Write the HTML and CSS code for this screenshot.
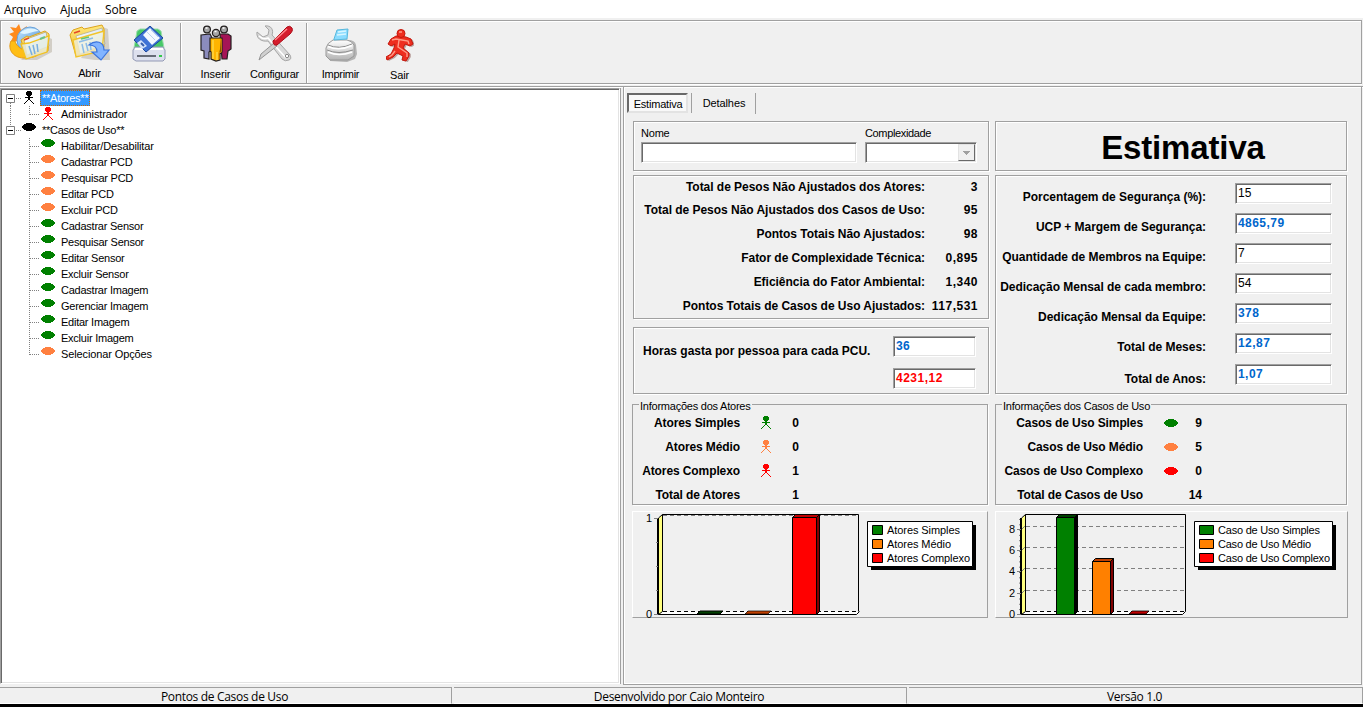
FILE: index.html
```html
<!DOCTYPE html>
<html lang="pt-BR">
<head>
<meta charset="utf-8">
<title>Pontos de Casos de Uso</title>
<link rel="stylesheet" href="styles.css">
</head>
<body>
<svg class="defs" aria-hidden="true">
  <defs>
    <symbol id="actor" viewBox="0 0 10 14"><path d="M3 0h4v1h1v3H7v1H6v1h3v1H6v2h1v1h1v1h1v1h1v1H9v-1H8v-1H7v-1H6v-1H4v1H3v1H2v1H1v1H0v-1h1v-1h1v-1h1V9h1V7H1V6h3V5H3V4H2V1h1z" fill="currentColor"/></symbol>
    <symbol id="oval" viewBox="0 0 14 8"><path d="M4 0h6v1h2v1h1v1h1v2h-1v1h-1v1h-2v1H4V7H2V6H1V5H0V3h1V2h1V1h2z" fill="currentColor"/></symbol>
    <symbol id="branch" viewBox="2 0 57 16"><path d="M30.500 0V16M31 8.500H41" fill="none" stroke="#808080" stroke-dasharray="1 1"/></symbol>
    <symbol id="last" viewBox="2 0 57 16"><path d="M30.500 0V9M31 8.500H41" fill="none" stroke="#808080" stroke-dasharray="1 1"/></symbol>
    <linearGradient id="paper" x1="0" y1="0" x2="1" y2="1"><stop offset="0" stop-color="#fff"/><stop offset="1" stop-color="#b9d6f4"/></linearGradient>
    <linearGradient id="gold" x1="0" y1="0" x2="0" y2="1"><stop offset="0" stop-color="#ffe97c"/><stop offset="1" stop-color="#efb92c"/></linearGradient>
    <linearGradient id="steel" x1="0" y1="0" x2="0" y2="1"><stop offset="0" stop-color="#fff"/><stop offset="1" stop-color="#b4b4b4"/></linearGradient>
    <linearGradient id="sky" x1="0" y1="0" x2="1" y2="1"><stop offset="0" stop-color="#c5e9ff"/><stop offset="1" stop-color="#3c82d2"/></linearGradient>
  </defs>
</svg>
<div class="window">
  <nav class="menu"><span class="m1">Arquivo</span><span class="m2">Ajuda</span><span class="m3">Sobre</span></nav>

  <header class="toolbar">
    <div class="tool t-novo">
      <svg width="44" height="38" viewBox="0 0 44 38">
        <path d="M36 12l7 3v13l-15 8H12z" fill="#d2cec6"/>
        <path d="M10 0l2 6 6-4-2 6 4 3-6 3-2 6-5-3-6 2 3-6-4-3 5-2-4-5 6 1z" fill="#ff8a1c"/>
        <circle cx="21" cy="16" r="13" fill="url(#sky)" stroke="#6ba3da"/>
        <path d="M11 9c5-5 13-6 19-2-6 0-10 3-15 3z" fill="#e0f5ff"/>
        <path d="M2 17c-4 9 3 18 15 17 8 0 14-3 16-8-6 3-13 3-18 0-5-2-8-5-9-9z" fill="#ffbe16" stroke="#e69a12"/>
        <path d="M12 16l6-4 2 1 16-6 4 3-1 17-21 7z" fill="url(#gold)" stroke="#dca31f"/>
        <path d="M15 16l22-8 3 14-22 9z" fill="url(#paper)" stroke="#bba86c" stroke-width=".8"/>
        <path d="M12 20l8-1 20-7-2 16-21 7z" fill="#e9efe2" fill-opacity=".8" stroke="#f3c21c" stroke-width="1.300"/>
        <path d="M20 22l3 9M24 21l2 9M28 20l1 8" stroke="#78aee0" stroke-width="1.500"/><path d="M15 16l5-2" stroke="#e34828" stroke-width="1.500"/><path d="M31 15l5-2" stroke="#6cc285" stroke-width="2"/>
      </svg><span>Novo</span></div>
    <div class="tool t-abrir">
      <svg width="44" height="38" viewBox="0 0 44 38">
        <path d="M35 3l5 2 2 31H27L13 34z" fill="#d2cfc8"/>
        <path d="M2 11l3-5 9-3 2 2 18-4 2 4v18L8 32z" fill="url(#gold)" stroke="#dca31f"/>
        <path d="M8 12l26-8 3 16-25 10z" fill="url(#paper)" stroke="#b9ad88" stroke-width=".8"/>
        <path d="M5 16l31-9-2 20-26 6z" fill="#f2f1dc" fill-opacity=".75" stroke="#f2c42a" stroke-width="1.400"/>
        <path d="M11 18l14-4M14 20l2 9M18 19l2 8M22 18l1 8" stroke="#8cbce7" stroke-width="1.500"/><path d="M6 9l6-2" stroke="#e34828" stroke-width="1.500"/><path d="M13 15l8-2" stroke="#63c573" stroke-width="1.500"/>
        <path d="M21 21c7-6 15-3 15 5h5l-8 10-9-8h5c0-5-3-7-8-7z" fill="#82b4ff" stroke="#3b74dd" stroke-width="1.200"/>
      </svg><span>Abrir</span></div>
    <div class="tool t-salvar">
      <svg width="34" height="36" viewBox="0 0 34 36">
        <path d="M5 5l3-2h18l3 2 3 17H2z" fill="#47c968" stroke="#9bdcac"/>
        <path d="M3 21h28l2 3v9l-2 2H4l-3-2v-9z" fill="#dde0ee" stroke="#9299b4"/>
        <path d="M3 23h28" stroke="#fff" stroke-width="2"/><path d="M5 30h19" stroke="#3f454f" stroke-width="1.500"/><path d="M27 30h3" stroke="#34c74a" stroke-width="2"/>
        <path d="M18 0l13 12-17 14L2 14z" fill="#3f73d6" stroke="#1d479c"/>
        <path d="M18 2l10 10-8 7-9-10z" fill="#f4f9ff"/><path d="M15 6l8 8M19 4l7 7" stroke="#b9d1ec"/>
        <path d="M9 14l6 6-5 3-5-6z" fill="#d7e6fb"/><path d="M9 17l3 3" stroke="#375eac" stroke-width="2"/>
      </svg><span>Salvar</span></div>
    <i class="sep"></i>
    <div class="tool t-inserir">
      <svg width="32" height="37" viewBox="0 0 32 37" stroke="#242020" stroke-width="1.200">
        <path d="M1 10l9-1 2 4v12l-3 2v7l-5-1v-7l-3-1z" fill="#8b8cbd"/><path d="M20 9h8l3 2v13l-3 2-1 8h-5z" fill="#a51456"/>
        <path d="M10 13h12v14l-2 2v6l-4 1-5-2v-7l-1-1z" fill="#ffb400"/><path d="M13 15v19M17 27v8" stroke="#ffe053"/><path d="M21 14v13l-2 1v6" stroke="#e08c00"/>
        <circle cx="7" cy="4.500" r="3.400" fill="#a5a5a5"/><circle cx="24" cy="4.500" r="3.400" fill="#a5a5a5"/><circle cx="16" cy="8" r="3.600" fill="#a5a5a5"/>
        <path d="M5.500 3h2M22.500 3h2M14.500 6.500h2" stroke="#fff" stroke-width="1.700"/>
      </svg><span>Inserir</span></div>
    <div class="tool t-config">
      <svg width="38" height="37" viewBox="0 0 38 37">
        <path d="M1 7l6 5 5-2 1-5-4-4c6-1 9 4 7 9l18 20q2 4-1 5-4 2-7-1L12 16C5 17 0 13 1 7z" fill="#d9d9d9" stroke="#a6a6a6"/>
        <path d="M3 11q4 4 9 2l18 20" fill="none" stroke="#fff" stroke-width="1.500"/>
        <circle cx="31" cy="31" r="1.700" fill="#fff" stroke="#888"/>
        <path d="M18 18l3 3L8 31l-5 4 2-6z" fill="#d0d0d0" stroke="#959595"/>
        <path d="M17 16L31 2q3-2 5 1c1 2 0 4-2 6L21 20q-4 1-4-4z" fill="#d51c2c" stroke="#ac0d17"/><path d="M19 15L31 4" stroke="#ff858a" stroke-width="1.500"/>
      </svg><span>Configurar</span></div>
    <i class="sep s2"></i>
    <div class="tool t-print">
      <svg width="32" height="34" viewBox="0 0 32 34">
        <path d="M4 24q-1-7 5-9l14-3q7 0 8 5l1 9-2 5-8 3-17-1z" fill="#b4b4b4"/>
        <path d="M1 20q1-5 7-8h14q5 1 7 5v11l-6 4H5l-4-4z" fill="url(#steel)" stroke="#999"/>
        <path d="M9 11l3-9 11-1-1 10-13 1z" fill="#8bdcff" stroke="#58b8dc"/><path d="M13 4l8-1M12 7l9-1" stroke="#d8f6ff" stroke-width="1.600"/>
        <path d="M3 17q11 5 24-1M2 22q11 5 26 0" fill="none" stroke="#8c8c8c"/><path d="M3 18.500q11 5 24-1M3 24q11 5 24 0" fill="none" stroke="#fff" stroke-width="1.500"/>
      </svg><span>Imprimir</span></div>
    <div class="tool t-sair">
      <svg width="28" height="33" viewBox="0 0 28 33">
        <path d="M15 6l6 2 5 2 2 5-3 2-5-2-2 4 6 5v3l-3 5-4-1 1-4-6-3-4 4-6 3-2-3 6-3 3-6 1-4-4 2-3-2 3-5 5-3z" fill="#b9a09d" transform="translate(.8 1)"/>
        <path d="M14 7l6 1 5 2 2 5-3 2-5-2-2 4 6 5v3l-3 5-4-1 1-4-6-3-4 4-6 3-1-3 5-3 3-6 1-4-4 2-3-2 3-5 5-3z" fill="#ee2e20" stroke="#c4180d"/>
        <circle cx="15" cy="4.500" r="4" fill="#ee2e20" stroke="#c4180d"/>
        <path d="M13 3h3M6 11l4-1 6 1 6 1 1 3M13 11l-1 7 6 4 3 2v4M9 22l-3 4-3 2" fill="none" stroke="#ff9b88" stroke-width="1.400"/>
      </svg><span>Sair</span></div>
  </header>

  <main class="work">
    <section class="tree">
      <div class="node"><svg class="twig root" viewBox="2 0 38 16"><path d="M10.500 13v3M16 8.500h6" stroke="#808080" stroke-dasharray="1 1"/><path d="M6.500 4.500h8v8h-8z" fill="#fff" stroke="#808080"/><path d="M8 8.500h5" stroke="#000"/><use href="#actor" x="24" y="1" width="10" height="14"/></svg><b class="sel">**Atores**</b></div>
      <div class="node"><svg class="twig" viewBox="2 0 57 16"><path d="M10.500 0v16M29.500 0v9M30 8.500h9" fill="none" stroke="#808080" stroke-dasharray="1 1"/><use class="red" href="#actor" x="43" y="1" width="10" height="14"/></svg><span>Administrador</span></div>
      <div class="node"><svg class="twig root" viewBox="2 0 38 16"><path d="M10.500 0v4M16 8.500h6" stroke="#808080" stroke-dasharray="1 1"/><path d="M6.500 4.500h8v8h-8z" fill="#fff" stroke="#808080"/><path d="M8 8.500h5" stroke="#000"/><use href="#oval" x="22" y="1" width="14" height="8"/></svg><b>**Casos de Uso**</b></div>
      <div class="node"><svg class="twig green" viewBox="2 0 57 16"><use href="#branch" x="1" y="0" width="57" height="16"/><use href="#oval" x="41" y="1" width="14" height="8"/></svg><span>Habilitar/Desabilitar</span></div>
      <div class="node"><svg class="twig coral" viewBox="2 0 57 16"><use href="#branch" x="1" y="0" width="57" height="16"/><use href="#oval" x="41" y="1" width="14" height="8"/></svg><span class="tight">Cadastrar PCD</span></div>
      <div class="node"><svg class="twig coral" viewBox="2 0 57 16"><use href="#branch" x="1" y="0" width="57" height="16"/><use href="#oval" x="41" y="1" width="14" height="8"/></svg><span class="tight">Pesquisar PCD</span></div>
      <div class="node"><svg class="twig coral" viewBox="2 0 57 16"><use href="#branch" x="1" y="0" width="57" height="16"/><use href="#oval" x="41" y="1" width="14" height="8"/></svg><span class="tight">Editar PCD</span></div>
      <div class="node"><svg class="twig coral" viewBox="2 0 57 16"><use href="#branch" x="1" y="0" width="57" height="16"/><use href="#oval" x="41" y="1" width="14" height="8"/></svg><span class="tight">Excluir PCD</span></div>
      <div class="node"><svg class="twig green" viewBox="2 0 57 16"><use href="#branch" x="1" y="0" width="57" height="16"/><use href="#oval" x="41" y="1" width="14" height="8"/></svg><span class="tight">Cadastrar Sensor</span></div>
      <div class="node"><svg class="twig green" viewBox="2 0 57 16"><use href="#branch" x="1" y="0" width="57" height="16"/><use href="#oval" x="41" y="1" width="14" height="8"/></svg><span class="tight">Pesquisar Sensor</span></div>
      <div class="node"><svg class="twig green" viewBox="2 0 57 16"><use href="#branch" x="1" y="0" width="57" height="16"/><use href="#oval" x="41" y="1" width="14" height="8"/></svg><span class="tight">Editar Sensor</span></div>
      <div class="node"><svg class="twig green" viewBox="2 0 57 16"><use href="#branch" x="1" y="0" width="57" height="16"/><use href="#oval" x="41" y="1" width="14" height="8"/></svg><span class="tight">Excluir Sensor</span></div>
      <div class="node"><svg class="twig green" viewBox="2 0 57 16"><use href="#branch" x="1" y="0" width="57" height="16"/><use href="#oval" x="41" y="1" width="14" height="8"/></svg><span class="tight">Cadastrar Imagem</span></div>
      <div class="node"><svg class="twig green" viewBox="2 0 57 16"><use href="#branch" x="1" y="0" width="57" height="16"/><use href="#oval" x="41" y="1" width="14" height="8"/></svg><span class="tight">Gerenciar Imagem</span></div>
      <div class="node"><svg class="twig green" viewBox="2 0 57 16"><use href="#branch" x="1" y="0" width="57" height="16"/><use href="#oval" x="41" y="1" width="14" height="8"/></svg><span class="tight">Editar Imagem</span></div>
      <div class="node"><svg class="twig green" viewBox="2 0 57 16"><use href="#branch" x="1" y="0" width="57" height="16"/><use href="#oval" x="41" y="1" width="14" height="8"/></svg><span class="tight">Excluir Imagem</span></div>
      <div class="node"><svg class="twig coral" viewBox="2 0 57 16"><use href="#last" x="1" y="0" width="57" height="16"/><use href="#oval" x="41" y="1" width="14" height="8"/></svg><span>Selecionar Opções</span></div>
    </section>

    <section class="panel">
      <div class="tabs"><span class="tab on">Estimativa</span><span class="tab">Detalhes</span></div>
      <div class="cols">
        <div class="left">
          <div class="box filter">
            <label class="f-name">Nome<span class="field"></span></label>
            <label class="f-cx">Complexidade<span class="field combo"><i><svg width="7" height="4" viewBox="0 0 7 4"><path d="M0 0h7v1H6v1H5v1H4v1H3V3H2V2H1V1H0z" fill="#a0a0a0"/></svg></i></span></label>
          </div>
          <div class="box totals">
            <p class="first"><b>Total de Pesos Não Ajustados dos Atores:</b><b>3</b></p>
            <p><b>Total de Pesos Não Ajustados dos Casos de Uso:</b><b>95</b></p>
            <p><b>Pontos Totais Não Ajustados:</b><b>98</b></p>
            <p><b>Fator de Complexidade Técnica:</b><b>0,895</b></p>
            <p><b>Eficiência do Fator Ambiental:</b><b>1,340</b></p>
            <p><b>Pontos Totais de Casos de Uso Ajustados:</b><b>117,531</b></p>
          </div>
          <div class="box hours">
            <b>Horas gasta por pessoa para cada PCU.</b>
            <div><span class="field blue">36</span><span class="field crimson">4231,12</span></div>
          </div>
          <fieldset class="info actors">
            <legend>Informações dos Atores</legend>
            <p><b>Atores Simples</b><svg class="green" width="10" height="14"><use href="#actor" width="10" height="14"/></svg><b>0</b></p>
            <p><b>Atores Médio</b><svg class="coral" width="10" height="14"><use href="#actor" width="10" height="14"/></svg><b>0</b></p>
            <p><b>Atores Complexo</b><svg class="red" width="10" height="14"><use href="#actor" width="10" height="14"/></svg><b>1</b></p>
            <p><b>Total de Atores</b><i></i><b>1</b></p>
          </fieldset>
          <div class="chart">
            <svg width="354" height="107" viewBox="633 512 354 107">
              <path d="M659 518l3-3v97l-3 3z" fill="#ffff80"/>
              <path d="M659 614.500h198l3-3H662z" fill="#fff"/>
              <path d="M658.500 518v96.500h198l3-3M662.500 514.500v97M662.500 611.500l-4 3M662.500 514.500h196v97M658.500 518l4-3.500" fill="none" stroke="#000"/>
              <path d="M657.500 518v96" stroke="#000"/><path d="M663 515.500h195" stroke="#808080" stroke-dasharray="4 3"/><path d="M663 611.500h195" stroke="#000" stroke-dasharray="4 3"/>
              <path d="M654 518.500h4M654 614.500h4M656 542.500h2M656 566.500h2M656 590.500h2" stroke="#808080"/>
              <path d="M697 614l3-3h23l-3 3z" fill="#004000" stroke="#000"/><path d="M745 614l3-3h23l-3 3z" fill="#c04000" stroke="#000" stroke-width=".7"/>
              <path d="M816.500 517.500l3-3v97l-3 3z" fill="#800000" stroke="#000"/><path d="M792.500 517.500l3-3h24l-3 3z" fill="#c00000" stroke="#000"/><path d="M792.500 517.500h24v97h-24z" fill="#f00" stroke="#000"/>
              <g class="ctext"><text x="646" y="522">1</text><text x="646" y="618">0</text></g>
              <path d="M871 525h105v45H871z"/><path d="M867.500 521.500h105v45h-105z" fill="#fff" stroke="#000"/>
              <g stroke="#000"><path d="M872.500 525.500h10v9h-10z" fill="#008000"/><path d="M872.500 539.500h10v9h-10z" fill="#ff8000"/><path d="M872.500 553.500h10v9h-10z" fill="#f00"/></g>
              <g class="ctext"><text x="887" y="534" textLength="73">Atores Simples</text><text x="887" y="548" textLength="64">Atores Médio</text><text x="887" y="562" textLength="83">Atores Complexo</text></g>
            </svg>
          </div>
        </div>
        <div class="right">
          <div class="box title">Estimativa</div>
          <div class="box estimate">
            <p><b>Porcentagem de Segurança (%):</b><span class="field">15</span></p>
            <p><b>UCP + Margem de Segurança:</b><span class="field blue">4865,79</span></p>
            <p><b>Quantidade de Membros na Equipe:</b><span class="field">7</span></p>
            <p><b>Dedicação Mensal de cada membro:</b><span class="field">54</span></p>
            <p><b>Dedicação Mensal da Equipe:</b><span class="field blue">378</span></p>
            <p><b>Total de Meses:</b><span class="field blue">12,87</span></p>
            <p class="late"><b>Total de Anos:</b><span class="field blue">1,07</span></p>
          </div>
          <fieldset class="info cases">
            <legend>Informações dos Casos de Uso</legend>
            <p><b>Casos de Uso Simples</b><svg class="green" width="14" height="8"><use href="#oval" width="14" height="8"/></svg><b>9</b></p>
            <p><b>Casos de Uso Médio</b><svg class="coral" width="14" height="8"><use href="#oval" width="14" height="8"/></svg><b>5</b></p>
            <p><b>Casos de Uso Complexo</b><svg class="red" width="14" height="8"><use href="#oval" width="14" height="8"/></svg><b>0</b></p>
            <p><b>Total de Casos de Uso</b><i></i><b>14</b></p>
          </fieldset>
          <div class="chart wide">
            <svg width="351" height="107" viewBox="996 512 351 107">
              <path d="M1022 518l3-3v97l-3 3z" fill="#ffff80"/><path d="M1022 614.500h161l3-3h-161z" fill="#fff"/>
              <path d="M1021.500 518v96.500h161l3-3M1025.500 514.500v97l-4 3M1025.500 514.500h160v97M1021.500 518l4-3.500" fill="none" stroke="#000"/>
              <path d="M1020.500 518v96" stroke="#000"/>
              <path d="M1026 526.500h159M1026 547.500h159M1026 568.500h159M1026 590.500h159M1022 529l3-3M1022 550l3-3M1022 571l3-3M1022 593l3-3" stroke="#808080" stroke-dasharray="4 3"/><path d="M1026 611.500h159" stroke="#000" stroke-dasharray="4 3"/>
              <path d="M1017 529.500h4M1017 550.500h4M1017 571.500h4M1017 593.500h4M1017 614.500h4" stroke="#808080"/><path d="M1019.500 519v95" stroke="#808080" stroke-dasharray="1 4.300"/>
              <path d="M1074.500 517.500l3-3v97l-3 3z" fill="#000" stroke="#000"/><path d="M1056.500 517.500l3-3h18l-3 3z" fill="#004000" stroke="#000"/><path d="M1056.500 517.500h18v97h-18z" fill="#008000" stroke="#000"/>
              <path d="M1110.500 561.500l3-3v53l-3 3z" fill="#800000" stroke="#000"/><path d="M1092.500 561.500l3-3h18l-3 3z" fill="#c04000" stroke="#000"/><path d="M1092.500 561.500h18v53h-18z" fill="#ff8000" stroke="#000"/>
              <path d="M1129 614l3-3h17l-3 3z" fill="#c00000" stroke="#000" stroke-width=".8"/>
              <g class="ctext"><text x="1009" y="533">8</text><text x="1009" y="554">6</text><text x="1009" y="575">4</text><text x="1009" y="597">2</text><text x="1009" y="618">0</text></g>
              <path d="M1198 525h138v45h-138z"/><path d="M1194.500 521.500h138v45h-138z" fill="#fff" stroke="#000"/>
              <g stroke="#000"><path d="M1199.500 525.500h14v9h-14z" fill="#008000"/><path d="M1199.500 539.500h14v9h-14z" fill="#ff8000"/><path d="M1199.500 553.500h14v9h-14z" fill="#f00"/></g>
              <g class="ctext"><text x="1218" y="534" textLength="102">Caso de Uso Simples</text><text x="1218" y="548" textLength="93">Caso de Uso Médio</text><text x="1218" y="562" textLength="112">Caso de Uso Complexo</text></g>
            </svg>
          </div>
        </div>
      </div>
    </section>
  </main>
  <footer class="status"><span>Pontos de Casos de Uso</span><span>Desenvolvido por Caio Monteiro</span><span>Versão 1.0</span></footer>
</div>
</body>
</html>
```
FILE: styles.css
```css
* { box-sizing: border-box; }
body { margin: 0; background: #f0f0f0; color: #000; font: 11px/16px "Liberation Sans", Arial, sans-serif; }
p { margin: 0; }
.defs { display: block; width: 0; height: 0; }
.window { width: 1363px; height: 707px; display: flex; flex-direction: column; overflow: hidden; }
.green { color: #008000; }
.coral { color: #ff8040; }
.red { color: #f00; }

.menu { height: 18px; flex: none; display: flex; gap: 14px; padding: 1px 0 0 4px; background: #fff; font: 12px/18px "Open Sans", "Noto Sans", sans-serif; letter-spacing: -.2px; }

.toolbar { height: 64px; flex: none; margin: 2px 0 0; display: flex; border: 1px solid #a0a0a0; width: 1362px; box-shadow: inset 1px 1px #fff, 0 1px #fff; }
.tool { width: 59px; flex: none; display: flex; flex-direction: column; align-items: center; justify-content: flex-end; padding-bottom: 1px; white-space: nowrap; }
.tool svg { display: block; margin-bottom: 4px; }
.tool span { height: 16px; letter-spacing: -.1px; }
.t-abrir { padding-bottom: 2px; }
.t-abrir svg { margin-bottom: 3px; }
.t-config span { letter-spacing: -.25px; }
.t-print span { letter-spacing: -.3px; }
.t-sair { padding-bottom: 0; }
.t-sair svg { margin-bottom: 5px; }
.sep { width: 2px; flex: none; margin: 2px 4px 0 2px; border-left: 1px solid #a0a0a0; background: #fff; }
.sep.s2 { margin: 2px 3px 0 2px; }

.work { margin-top: 2px; height: 600px; flex: none; display: flex; border-top: 1px solid #a0a0a0; box-shadow: inset 0 1px #fff; gap: 3px; padding-bottom: 1px; }
.tree { width: 620px; height: 596px; margin-top: 1px; background: #fff; border: 1px solid; border-color: #a0a0a0 #fff #fff #a0a0a0; box-shadow: inset 1px 1px #696969, inset -1px -1px #e3e3e3, 1px 0 #a0a0a0; padding: 1px 0 0 1px; }
.node { height: 16px; display: flex; }
.twig { width: 57px; height: 16px; flex: none; }
.twig.root { width: 38px; height: 16px; }
.node span { padding-left: 2px; letter-spacing: -.12px; }
.node .tight { letter-spacing: -.24px; }
.node b { font-weight: 400; font-size: 11px; padding: 0 2px; letter-spacing: -.25px; }
.node .sel { width: 50px; letter-spacing: -.25px; background: #39f; color: #fff; outline: 1px dotted #c60; outline-offset: -1px; }

.panel { width: 739px; height: 598px; border: 1px solid #a0a0a0; border-top: 0; box-shadow: inset 1px 0 #fff, inset 0 -1px #fff; padding: 6px 0 0 3px; }
.tabs { display: flex; height: 21px; }
.tab { width: 65px; text-align: center; border-right: 1px solid #a0a0a0; line-height: 20px; padding-left: 2px; letter-spacing: -.1px; }
.tab.on { width: 61px; height: 20px; margin-right: 3px; padding-left: 1px; border: 2px solid; border-color: #696969 #e3e3e3 #e3e3e3 #696969; background: #f9f9f9; box-shadow: 3px 0 #f0f0f0, 4px 0 #a0a0a0; line-height: 19px; letter-spacing: -.2px; }
.cols { display: flex; gap: 6px; padding: 7px 0 0 6px; }
.left { width: 356px; }
.right { width: 353px; }
.box { border: 1px solid #a0a0a0; box-shadow: inset 1px 1px #fff, 1px 1px #fff; width: 356px; }
.right .box { width: 352px; }
.field { display: block; height: 21px; background: #fff; border: 1px solid; border-color: #a0a0a0 #fff #fff #a0a0a0; box-shadow: inset 1px 1px #696969, inset -1px -1px #e3e3e3; padding: 1px 0 0 2px; font-size: 12px; }
.field.blue { color: #0066cc; font-weight: 700; letter-spacing: .45px; }
.field.crimson { color: #f00; font-weight: 700; letter-spacing: .5px; }

.filter { height: 50px; display: flex; gap: 8px; padding: 3px 0 0 7px; }
.filter .field { margin-top: 1px; }
.f-name { width: 216px; letter-spacing: -.2px; }
.f-cx { width: 112px; letter-spacing: -.35px; }
.field.combo { display: flex; justify-content: flex-end; padding: 1px; }
.combo i { width: 17px; height: 17px; background: #f0f0f0; border: 1px solid; border-color: #e3e3e3 #696969 #696969 #e3e3e3; display: flex; align-items: center; justify-content: center; }

b { font-size: 12px; letter-spacing: -.03px; }
.totals { height: 144px; margin-top: 4px; padding-top: 2px; }
.totals p { display: flex; height: 24px; line-height: 17px; justify-content: flex-end; padding-right: 10px; }
.totals .first { line-height: 19px; }
.totals b:last-child { width: 53px; text-align: right; letter-spacing: .5px; }
.hours { height: 67px; margin-top: 8px; padding: 8px 12px 0 9px; display: flex; justify-content: space-between; }
.hours b { padding-top: 7px; letter-spacing: 0; }
.hours div { width: 83px; display: flex; flex-direction: column; gap: 11px; }

.info { margin: 5px 0 0; height: 106px; padding: 0; border: 1px solid #a0a0a0; box-shadow: 1px 1px #fff; }
.info legend { margin-left: 6px; padding: 0 1px; height: 10px; line-height: 14px; letter-spacing: -.23px; }
.info.actors { margin-left: -1px; width: 356px; }
.info.cases { width: 352px; }
.info p { display: grid; align-items: center; height: 24px; grid-template-columns: 107px 52px 7px; transform: translateY(2px); }
.info p b:first-child { text-align: right; letter-spacing: -.1px; }
.info p svg { justify-self: center; }
.info.cases p { grid-template-columns: 147px 55px 4px; }
.info p b:last-child { display: flex; justify-content: flex-end; }
.chart { margin: 6px 0 0 -1px; width: 356px; height: 107px; border: 1px solid; border-color: #fff #a0a0a0 #a0a0a0 #fff; }
.chart svg { display: block; }
.chart.wide { margin-left: 0; width: 353px; }
.ctext { font: 11px "Liberation Sans", Arial, sans-serif; }

.title { height: 50px; text-align: center; font: 700 33px/51px "Liberation Sans", Arial, sans-serif; letter-spacing: -.15px; padding-left: 24px; }
.estimate { height: 219px; margin-top: 4px; padding-top: 7px; }
.estimate p { display: grid; grid-template-columns: 210px 97px; column-gap: 29px; height: 30px; white-space: nowrap; }
.estimate b { text-align: right; padding-top: 6px; }
.estimate .late { padding-top: 1px; }
.estimate .late b { padding-top: 7px; }

.status { flex: none; height: 20px; margin-top: 1px; display: grid; grid-template-columns: 452px 453px 1fr; column-gap: 2px; border-bottom: 3px solid #000; font: 12px/18px "Open Sans", "Noto Sans", sans-serif; text-align: center; letter-spacing: -.32px; }
.status span { height: 17px; border: 1px solid; border-color: #a0a0a0 #a0a0a0 #fff #a0a0a0; border-left: 0; padding-right: 2px; }
```
